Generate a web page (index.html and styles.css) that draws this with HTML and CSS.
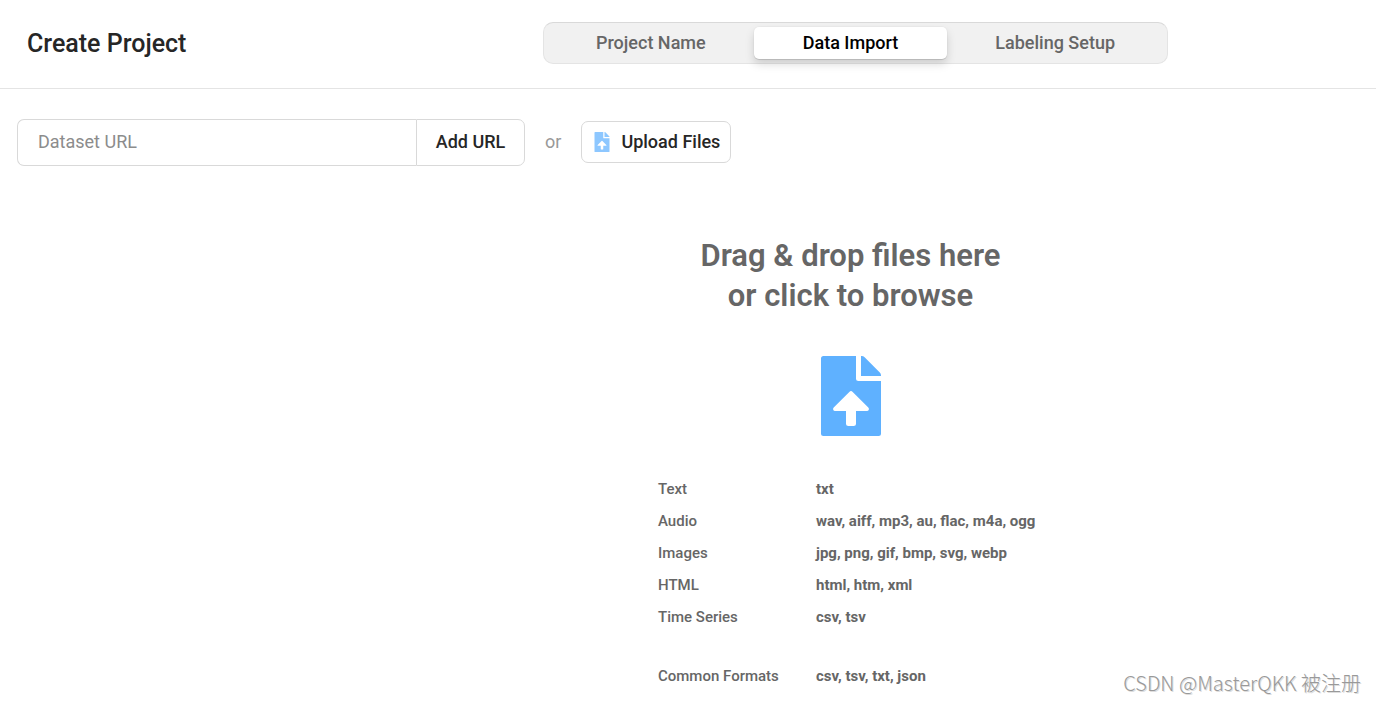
FILE: index.html
```html
<!DOCTYPE html>
<html lang="en">
<head>
<meta charset="utf-8">
<meta name="viewport" content="width=device-width, initial-scale=1">
<title>Create Project</title>
<link rel="stylesheet" href="styles.css">
</head>
<body>
<svg class="sprite" aria-hidden="true">
  <symbol id="file-upload" viewBox="0 0 60 80">
    <path fill-rule="evenodd" d="M2.500 0H35V22.500Q35 25 37.500 25H60V77.500Q60 80 57.500 80H2.500Q0 80 0 77.500V2.500Q0 0 2.500 0ZM28.300 35.900Q30 34.200 31.700 35.900L47.300 51.500Q48.400 52.800 47.700 54Q47.200 55 46 55H35V67.500Q35 70 32.500 70H27.500Q25 70 25 67.500V55H14Q12.800 55 12.300 54Q11.600 52.800 12.700 51.500Z"/>
    <path d="M40 0H40.600Q42.400 0 43.600 1.200L58.800 16.500Q60 17.700 60 19.400V20H40Z"/>
  </symbol>
</svg>
<header class="header">
  <h1 class="title">Create Project</h1>
  <nav class="steps" aria-label="Project steps">
    <button class="step" type="button">Project Name</button>
    <button class="step step-active" type="button" aria-current="step">Data Import</button>
    <button class="step" type="button">Labeling Setup</button>
  </nav>
</header>
<main>
  <div class="toolbar">
    <form class="url-form">
      <input class="url-input" type="text" aria-label="Dataset URL" placeholder="Dataset URL">
      <button class="url-button" type="button">Add URL</button>
    </form>
    <span class="or">or</span>
    <button class="upload" type="button"><svg class="upload-icon" aria-hidden="true"><use href="#file-upload"/></svg>Upload Files</button>
  </div>
  <section class="dropzone">
    <h2 class="drop-title">Drag &amp; drop files here<br>or click to browse</h2>
    <svg class="drop-icon" aria-hidden="true"><use href="#file-upload"/></svg>
    <dl class="formats">
      <dt>Text</dt><dd>txt</dd>
      <dt>Audio</dt><dd>wav, aiff, mp3, au, flac, m4a, ogg</dd>
      <dt>Images</dt><dd>jpg, png, gif, bmp, svg, webp</dd>
      <dt>HTML</dt><dd>html, htm, xml</dd>
      <dt>Time Series</dt><dd>csv, tsv</dd>
      <dt class="common">Common Formats</dt><dd class="common">csv, tsv, txt, json</dd>
    </dl>
  </section>
</main>
<p class="watermark">CSDN @MasterQKK 被注册</p>
</body>
</html>
```
FILE: styles.css
```css
* { box-sizing: border-box; }
body {
  margin: 0;
  background: #fff;
  color: #262626;
  font-family: Roboto, "Noto Sans CJK SC", sans-serif;
  font-size: 18px;
}
button, input { font: inherit; color: inherit; }
h1, h2, p, dl, dd { margin: 0; }
.sprite { position: absolute; width: 0; height: 0; }

.header {
  display: grid;
  grid-template-columns: 516px minmax(0, 625px);
  align-items: center;
  padding: 22px 27px 24px;
  border-bottom: 1px solid #e4e4e4;
}
.title { padding-top: 2px; font-size: 25px; font-weight: 500; line-height: 40px; }
.steps {
  display: grid;
  grid-template-columns: 206fr 194fr 216fr;
  padding: 4px;
  border: 1px solid #e4e4e4;
  border-top-color: #d9d9d9;
  border-radius: 10px;
  background: #f1f1f1;
}
.step {
  height: 32px;
  padding: 0 0 2px;
  border: 0;
  border-radius: 5px;
  background: none;
  color: #666;
  font-weight: 500;
}
.step-active {
  background: #fff;
  color: #000;
  box-shadow: 0 1px 0 rgba(0, 0, 0, .1), 0 0 0 1px rgba(0, 0, 0, .02), 0 5px 10px rgba(0, 0, 0, .15);
}

.toolbar { display: flex; align-items: center; padding: 30px 17px 0; }
.url-form { display: flex; width: 508px; height: 47px; }
.url-input {
  flex: 1;
  min-width: 0;
  padding: 0 20px 2px;
  border: 1px solid #d9d9d9;
  border-right: 0;
  border-radius: 7px 0 0 7px;
}
.url-input::placeholder { color: #8c8c8c; opacity: 1; }
.url-button {
  width: 109px;
  padding: 0 0 2px;
  border: 1px solid #d9d9d9;
  border-radius: 0 7px 7px 0;
  background: #fff;
  font-weight: 500;
}
.or { padding: 0 20px 2px; color: #999; }
.upload {
  display: flex;
  align-items: center;
  gap: 11px;
  height: 42px;
  margin-bottom: 2px;
  padding: 0 10px 0 12px;
  border: 1px solid #d9d9d9;
  border-radius: 7px;
  background: #fff;
  font-weight: 500;
}
.upload-icon { width: 16px; height: 20px; fill: #8dc7ff; }

.dropzone {
  display: flex;
  flex-direction: column;
  align-items: center;
  padding: 70px 0 12px 325px;
  color: #666;
}
.drop-title { font-size: 31px; font-weight: 600; line-height: 40px; text-align: center; }
.drop-icon { width: 60px; height: 80px; margin: 40px 0 43px; fill: #5fb1ff; }
.formats {
  display: grid;
  grid-template-columns: 158px minmax(227px, auto);
  row-gap: 12px;
  font-size: 15px;
  line-height: 20px;
}
.formats dt { font-weight: 500; }
.formats dd { font-weight: 700; }
.formats .common { margin-top: 27px; }

.watermark {
  position: absolute;
  right: 15px;
  bottom: 6px;
  color: #999;
  font-family: "Noto Sans CJK SC", sans-serif;
  font-size: 20px;
  font-weight: 300;
  line-height: 28px;
  text-shadow: 1px 1px 0 #ddd;
}
```
